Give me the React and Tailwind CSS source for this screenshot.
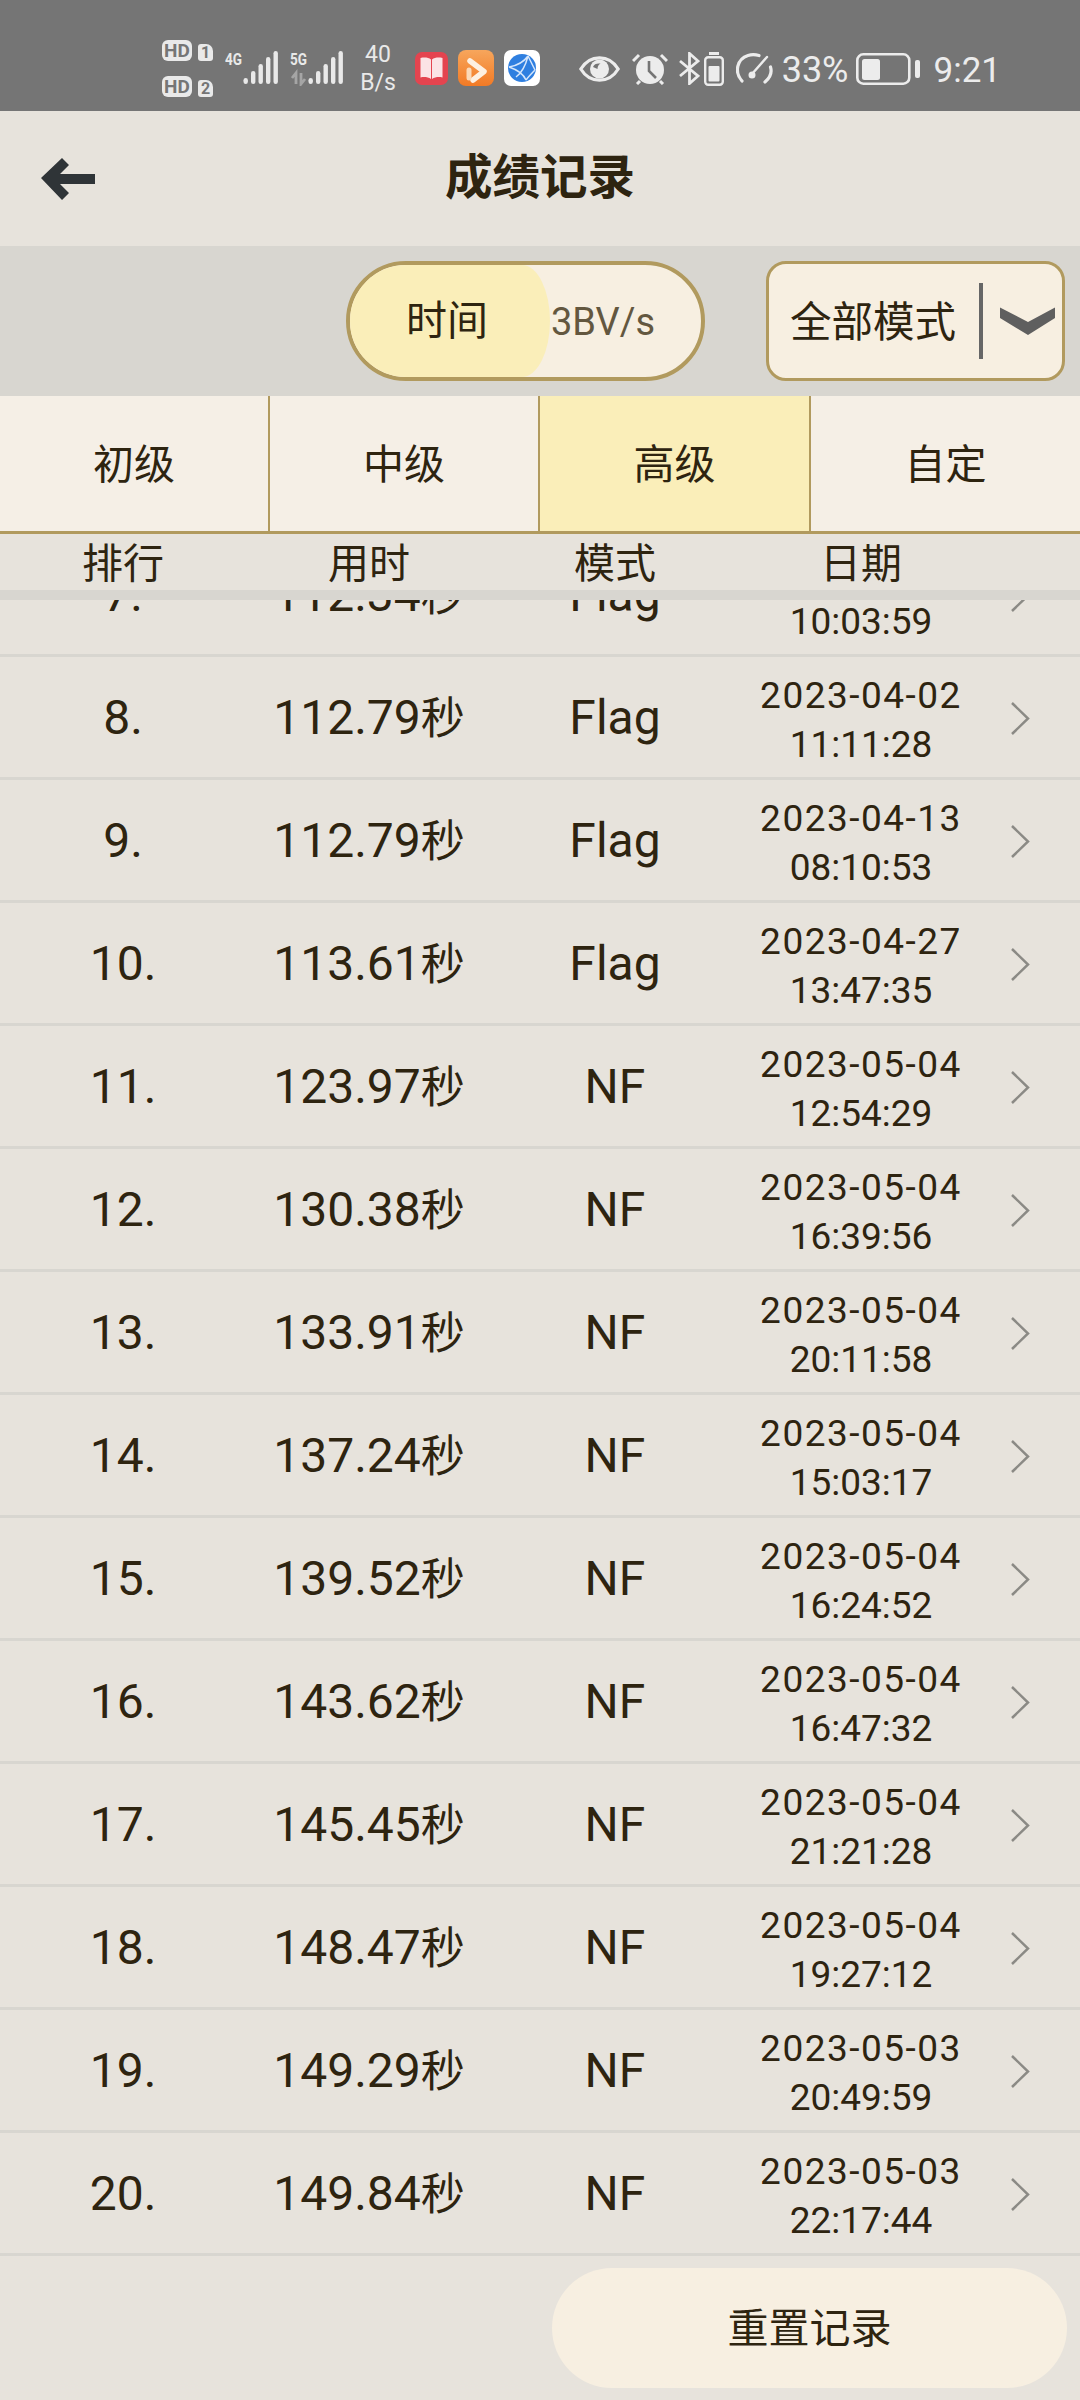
const FONT = "font-['Roboto','Noto_Sans_CJK_SC',sans-serif]";

const rows = [
  ["7.", "112.34", "Flag", "2023-03-30", "10:03:59"],
  ["8.", "112.79", "Flag", "2023-04-02", "11:11:28"],
  ["9.", "112.79", "Flag", "2023-04-13", "08:10:53"],
  ["10.", "113.61", "Flag", "2023-04-27", "13:47:35"],
  ["11.", "123.97", "NF", "2023-05-04", "12:54:29"],
  ["12.", "130.38", "NF", "2023-05-04", "16:39:56"],
  ["13.", "133.91", "NF", "2023-05-04", "20:11:58"],
  ["14.", "137.24", "NF", "2023-05-04", "15:03:17"],
  ["15.", "139.52", "NF", "2023-05-04", "16:24:52"],
  ["16.", "143.62", "NF", "2023-05-04", "16:47:32"],
  ["17.", "145.45", "NF", "2023-05-04", "21:21:28"],
  ["18.", "148.47", "NF", "2023-05-04", "19:27:12"],
  ["19.", "149.29", "NF", "2023-05-03", "20:49:59"],
  ["20.", "149.84", "NF", "2023-05-03", "22:17:44"],
];

function SimRow({ n }) {
  return (
    <div className="flex items-end gap-[6px]">
      <span className="flex h-[21px] w-[30px] items-center justify-center rounded-[6px] bg-[#e9e9e9] text-[19px] font-bold leading-none text-[#757575]">HD</span>
      <span className="flex h-[17px] w-[15px] items-center justify-center rounded-[3px] rounded-tr-[7px] bg-[#e9e9e9] text-[16px] font-bold leading-none text-[#757575]">{n}</span>
    </div>
  );
}

function Signal({ label, arrows }) {
  return (
    <svg width="53" height="36" viewBox="0 0 53 36" className="shrink-0">
      <text x="0" y="15" fontSize="17" fontWeight="700" fill="#e9e9e9" textLength="17" lengthAdjust="spacingAndGlyphs">{label}</text>
      {arrows && <path d="M6 34V23l-4 5M11 23v11l4-5" fill="none" stroke="#a5a5a5" strokeWidth="2.800" />}
      <rect x="18.500" y="28" width="4.400" height="6" rx="2.200" fill="#e9e9e9" />
      <rect x="26" y="21" width="4.400" height="13" rx="2.200" fill="#e9e9e9" />
      <rect x="33.500" y="14" width="4.400" height="20" rx="2.200" fill="#e9e9e9" />
      <rect x="41" y="7" width="4.400" height="27" rx="2.200" fill="#e9e9e9" />
      <rect x="48.500" y="1" width="4.400" height="33" rx="2.200" fill="#e9e9e9" />
    </svg>
  );
}

function AppIcons() {
  return (
    <div className="flex items-center gap-[10px]">
      <svg width="33" height="33" viewBox="0 0 33 33">
        <rect width="33" height="33" rx="7" fill="#e4444f" />
        <path d="M5.500 6c4-1 8-.5 10.500 1.500V27c-3-2-7-2.500-10.500-1.500zM27.500 6c-4-1-8-.5-10.500 1.500V27c3-2 7-2.500 10.500-1.500z" fill="#fbe3e5" />
      </svg>
      <svg width="36" height="36" viewBox="0 0 36 36">
        <defs>
          <linearGradient id="org" x1="0" y1="0" x2="0" y2="1">
            <stop offset="0" stopColor="#f7a65c" />
            <stop offset="1" stopColor="#f27a25" />
          </linearGradient>
        </defs>
        <rect width="36" height="36" rx="8" fill="url(#org)" />
        <path d="M12 11l14 10.500L15 30" fill="none" stroke="#fdf0e2" strokeWidth="5.500" strokeLinecap="round" strokeLinejoin="round" />
        <path d="M11 20v8" fill="none" stroke="#fbd9b8" strokeWidth="5" strokeLinecap="round" />
      </svg>
      <svg width="36" height="36" viewBox="0 0 36 36">
        <rect width="36" height="36" rx="7" fill="#fff" />
        <circle cx="18" cy="18" r="14" fill="#2f7fe0" />
        <path d="M5 17c6-1 14-4 19-11M5 17c6 2 14 6 17 13M24 6c3 6 5 10 7 14M24 6c-2 8-5 16-12 21M31 20c-3 3-6 6-9 10" stroke="#d5e6fb" strokeWidth="1.500" fill="none" />
      </svg>
    </div>
  );
}

function RightIcons() {
  return (
    <div className="flex items-center">
      <svg width="41" height="26" viewBox="0 0 41 26">
        <path d="M1.800 13C7 4.500 13 1.800 20.500 1.800S34 4.500 39.200 13C34 21.500 28 24.200 20.500 24.200S7 21.500 1.800 13z" fill="none" stroke="#ececec" strokeWidth="3.200" />
        <circle cx="20.500" cy="13" r="9.500" fill="#ececec" />
        <path d="M14 11c1-3 4-4 7.500-3.500-2 1-3 3-3 5.500z" fill="#757575" />
      </svg>
      <svg width="36" height="32" viewBox="0 0 36 32" className="ml-[12px]">
        <circle cx="18" cy="17" r="14" fill="#ececec" />
        <path d="M17 8v10l7 7" fill="none" stroke="#757575" strokeWidth="2.600" />
        <path d="M1 8l6-6M35 8l-6-6M5 31l3-3M31 31l-3-3" stroke="#ececec" strokeWidth="3" />
      </svg>
      <svg width="21" height="33" viewBox="0 0 21 33" className="ml-[11px]">
        <path d="M1 9l18 15-8.500 7.500V1.500L19 9 1 24" fill="none" stroke="#ececec" strokeWidth="2.800" />
      </svg>
      <svg width="20" height="34" viewBox="0 0 20 34" className="ml-[4px]">
        <rect x="5" y="0" width="10" height="3" fill="#ececec" />
        <rect x="1.200" y="5.200" width="17.600" height="27.600" rx="3" fill="none" stroke="#ececec" strokeWidth="2.400" />
        <rect x="4.500" y="14" width="11" height="15.500" rx="1" fill="#ececec" />
      </svg>
      <svg width="37" height="31" viewBox="0 0 37 31" className="ml-[12px]">
        <path d="M6 28C-2 19 1 6 12 2.500c4-1.200 8-.8 11 0" fill="none" stroke="#ececec" strokeWidth="3.200" strokeLinecap="round" />
        <path d="M29 29c6-5 7-10 5.500-15" fill="none" stroke="#ececec" strokeWidth="3.200" strokeLinecap="round" />
        <path d="M16 21L31 4" fill="none" stroke="#ececec" strokeWidth="2.400" strokeLinecap="round" />
        <circle cx="16" cy="22" r="3.500" fill="#ececec" />
      </svg>
      <span className="ml-[9px] mt-[3px] text-[36px] leading-none text-[#ececec]">33%</span>
      <svg width="64" height="32" viewBox="0 0 64 32" className="ml-[7px]">
        <rect x="1.300" y="1.300" width="52" height="29.400" rx="6" fill="none" stroke="#ececec" strokeWidth="2.600" />
        <rect x="6" y="6" width="18" height="21" rx="2.500" fill="#ececec" />
        <rect x="59" y="7" width="5" height="18" rx="2" fill="#ececec" />
      </svg>
      <span className="ml-[14px] mt-[3px] text-[35px] leading-none text-[#ececec]">9:21</span>
    </div>
  );
}

function StatusBar() {
  return (
    <div className="flex h-[111px] items-center bg-[#757575] pl-[162px] pr-[79px]">
      <div className="flex flex-col gap-[15px] pt-[26px]">
        <SimRow n="1" />
        <SimRow n="2" />
      </div>
      <div className="ml-[12px] flex gap-[12px] pt-[25px]">
        <Signal label="4G" />
        <Signal label="5G" arrows />
      </div>
      <div className="ml-[15px] flex w-[40px] flex-col items-center pt-[27px] text-[23px] leading-[28px] text-[#e9e9e9]">
        <span>40</span>
        <span>B/s</span>
      </div>
      <div className="ml-[17px] pt-[25px]">
        <AppIcons />
      </div>
      <div className="ml-auto pt-[26px]">
        <RightIcons />
      </div>
    </div>
  );
}

function Header() {
  return (
    <div className="relative flex h-[135px] items-center justify-center bg-[#e7e3dc]">
      <svg width="54" height="42" viewBox="0 0 54 42" className="absolute left-[41px] top-[47px]">
        <path d="M0 20L21 0l7 7-9 9h35v10H19l9 9-7 7z" fill="#2f3437" />
      </svg>
      <h1 className="text-[47.500px] font-bold leading-none text-[#2e2410]">成绩记录</h1>
    </div>
  );
}

function FilterBar() {
  return (
    <div className="flex h-[150px] items-center justify-end gap-[61px] bg-[#d8d6d0] pr-[15px]">
      <div className="flex h-[120px] w-[359px] overflow-hidden rounded-[60px] border-[4px] border-[#b19a5e] bg-[#f7efe1]">
        <div className="flex w-[200px] items-center justify-center rounded-r-[30px_60px] bg-[#faeeb9] pr-[6px] pt-[2px] text-[41px] text-[#2e2410]">时间</div>
        <div className="flex flex-1 items-center pl-[1px] pt-[3px] text-[38px] text-[#63573f]">3BV/s</div>
      </div>
      <div className="flex h-[120px] w-[299px] items-center rounded-[20px] border-[3px] border-[#b19a5e] bg-[#f7efe1] pl-[21px]">
        <span className="w-[189px] pt-[4px] text-[41.500px] leading-none text-[#2e2410]">全部模式</span>
        <div className="h-[76px] w-[4px] bg-[#666666]" />
        <svg width="56" height="29" viewBox="0 0 56 29" className="ml-[17px]">
          <path d="M0 .5L28 15 55 .5V11L28 28 0 11z" fill="#5f5f5f" />
        </svg>
      </div>
    </div>
  );
}

function Tabs() {
  const tabs = ["初级", "中级", "高级", "自定"];
  return (
    <div className="grid h-[138px] grid-cols-[270px_270px_271px_269px] border-b-[3px] border-[#b19a5e] bg-[#f5efe6]">
      {tabs.map((t, i) => (
        <div
          key={t}
          className={`flex items-center justify-center pt-[5px] text-[41px] text-[#2e2410] ${i < 3 ? "border-r-2 border-[#b19a5e]" : ""} ${i === 2 ? "bg-[#faeeb9]" : ""}`}
        >
          {t}
        </div>
      ))}
    </div>
  );
}

function ColumnHead() {
  return (
    <div className="border-b-[10px] border-[#d8d6d0] bg-[#e7e3dc]">
      <div className="grid h-[56px] grid-cols-[246px_246px_246px_246px] items-center pt-[5px] text-center text-[41px] leading-none text-[#2e2410]">
        <span>排行</span>
        <span>用时</span>
        <span>模式</span>
        <span>日期</span>
      </div>
    </div>
  );
}

function Row({ rank, time, mode, date, clock }) {
  return (
    <div className="grid h-[123px] grid-cols-[246px_246px_246px_246px_96px] items-center border-b-[3px] border-[#d8d6d0] pt-[2px] text-center text-[#2e2410]">
      <span className="text-[48px] leading-none">{rank}</span>
      <span className="text-[48px] leading-none">
        {time}
        <span className="text-[44px]">秒</span>
      </span>
      <span className="text-[48px] leading-none">{mode}</span>
      <div className="flex flex-col items-center pt-[3px] text-[37px] leading-[49px]">
        <span className="tracking-[1.5px]">{date}</span>
        <span>{clock}</span>
      </div>
      <svg width="20" height="33" viewBox="0 0 20 33" className="ml-[26px]">
        <path d="M2 1l16 15.500L2 32" fill="none" stroke="#8b8a85" strokeWidth="2.500" />
      </svg>
    </div>
  );
}

export default function App() {
  return (
    <div className={`flex h-[2400px] w-[1080px] flex-col overflow-hidden bg-[#e7e3dc] ${FONT}`}>
      <StatusBar />
      <Header />
      <FilterBar />
      <Tabs />
      <ColumnHead />
      <div className="h-[1656px] shrink-0 overflow-hidden">
        <div className="-mt-[66px]">
          {rows.map((r) => (
            <Row key={r[0]} rank={r[0]} time={r[1]} mode={r[2]} date={r[3]} clock={r[4]} />
          ))}
        </div>
      </div>
      <div className="flex justify-end pr-[13px] pt-[12px]">
        <button className="h-[120px] w-[515px] rounded-[60px] bg-[#f7efe1] pt-[3px] text-[41px] text-[#2e2410]">重置记录</button>
      </div>
    </div>
  );
}
